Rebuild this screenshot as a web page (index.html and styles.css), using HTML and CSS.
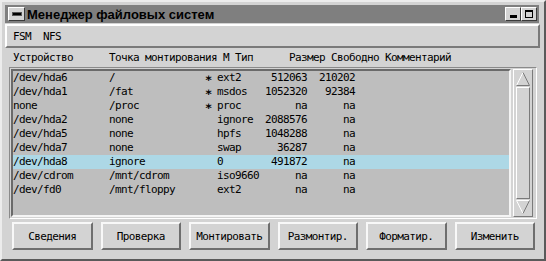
FILE: index.html
```html
<!DOCTYPE html>
<html lang="ru">
<head>
    <meta charset="UTF-8">
    <title>Менеджер файловых систем</title>
    <link rel="stylesheet" href="styles.css">
</head>
<body>

<div class="window">
    <div class="titlebar">
        <span class="wm-btn close"><i></i></span>
        <span class="title">Менеджер файловых систем</span>
        <span class="wm-btn min"><i></i></span>
        <span class="wm-btn max"><i></i></span>
    </div>

    <div class="menubar">
        <span>FSM</span>
        <span>NFS</span>
    </div>

    <div class="header">
        <span>Устройство</span>
        <span>Точка монтирования</span>
        <span>М</span>
        <span>Тип</span>
        <span>Размер</span>
        <span>Свободно</span>
        <span>Комментарий</span>
    </div>

    <div class="listframe">
        <div class="list">
            <div class="row"><span>/dev/hda6</span><span>/</span><span class="mark">∗</span><span>ext2</span><span class="num">512063</span><span class="num">210202</span><span></span></div>
            <div class="row"><span>/dev/hda1</span><span>/fat</span><span class="mark">∗</span><span>msdos</span><span class="num">1052320</span><span class="num">92384</span><span></span></div>
            <div class="row"><span>none</span><span>/proc</span><span class="mark">∗</span><span>proc</span><span class="num">na</span><span class="num">na</span><span></span></div>
            <div class="row"><span>/dev/hda2</span><span>none</span><span></span><span>ignore</span><span class="num">2088576</span><span class="num">na</span><span></span></div>
            <div class="row"><span>/dev/hda5</span><span>none</span><span></span><span>hpfs</span><span class="num">1048288</span><span class="num">na</span><span></span></div>
            <div class="row"><span>/dev/hda7</span><span>none</span><span></span><span>swap</span><span class="num">36287</span><span class="num">na</span><span></span></div>
            <div class="row selected"><span>/dev/hda8</span><span>ignore</span><span></span><span>0</span><span class="num">491872</span><span class="num">na</span><span></span></div>
            <div class="row"><span>/dev/cdrom</span><span>/mnt/cdrom</span><span></span><span>iso9660</span><span class="num">na</span><span class="num">na</span><span></span></div>
            <div class="row"><span>/dev/fd0</span><span>/mnt/floppy</span><span></span><span>ext2</span><span class="num">na</span><span class="num">na</span><span></span></div>
        </div>

        <div class="scrollbar">
            <svg class="arrow" width="14" height="14" viewBox="0 0 14 14">
                <polygon points="7,0.5 0.5,13.5 13.5,13.5" fill="#d3d3d3"/>
                <polyline points="0.5,13.5 7,0.5" fill="none" stroke="#ffffff"/>
                <polyline points="7,0.5 13.5,13.5 0.5,13.5" fill="none" stroke="#7a7a7a"/>
            </svg>
            <div class="slider"></div>
            <svg class="arrow" width="14" height="14" viewBox="0 0 14 14">
                <polygon points="0.5,0.5 13.5,0.5 7,13.5" fill="#d3d3d3"/>
                <polyline points="7,13.5 0.5,0.5 13.5,0.5" fill="none" stroke="#ffffff"/>
                <polyline points="13.5,0.5 7,13.5" fill="none" stroke="#7a7a7a"/>
            </svg>
        </div>
    </div>

    <div class="buttons">
        <button>Сведения</button>
        <button>Проверка</button>
        <button>Монтировать</button>
        <button>Размонтир.</button>
        <button>Форматир.</button>
        <button>Изменить</button>
    </div>
</div>

</body>
</html>
```

FILE: styles.css
```css
/* Base */
* {
    box-sizing: border-box;
    margin: 0;
    padding: 0;
}
body {
    width: 546px;
    height: 261px;
    overflow: hidden;
    background-color: #d3d3d3;
}

/* Window frame */
.window {
    width: 546px;
    height: 261px;
    display: flex;
    flex-direction: column;
    padding: 3px 4px 3px 3px;
    border: 2px solid;
    border-color: #ececec #5a5a5a #5a5a5a #ececec;
    background-color: #d3d3d3;
    font-family: "DejaVu Sans Mono", monospace;
    font-size: 11px;
    letter-spacing: -0.62px;
    color: #000;
}

/* Title bar */
.titlebar {
    height: 18px;
    margin-right: 1px;
    display: flex;
    align-items: center;
    padding: 0 2px 0 3px;
    background-color: #7f7f7f;
}
.title {
    flex: 1;
    margin-left: 2px;
    font-family: "Liberation Sans", Arial, sans-serif;
    font-size: 13px;
    font-weight: bold;
    letter-spacing: 0;
}
.wm-btn {
    display: flex;
    align-items: center;
    justify-content: center;
    width: 16px;
    height: 14px;
    background-color: #d3d3d3;
    border: 1px solid;
    border-color: #ffffff #3a3a3a #3a3a3a #ffffff;
}
.wm-btn.close {
    width: 17px;
}
.wm-btn.close i {
    width: 10px;
    height: 4px;
    background-color: #000;
    border: 1px solid #555;
}
.wm-btn.min {
    align-items: flex-end;
    padding-bottom: 2px;
}
.wm-btn.min i {
    width: 7px;
    height: 3px;
    background-color: #000;
}
.wm-btn.max i {
    width: 8px;
    height: 8px;
    border: 1px solid #000;
    border-top-width: 2px;
}

/* Menu bar */
.menubar {
    height: 24px;
    margin-top: 1px;
    display: flex;
    align-items: center;
    gap: 12px;
    padding-left: 6px;
    border: 2px solid;
    border-color: #ffffff #7a7a7a #7a7a7a #ffffff;
}

/* Column header */
.header {
    height: 19px;
    display: grid;
    grid-template-columns: 96px 114px 12px 54px 42px 54px 1fr;
    align-items: center;
    padding-left: 8px;
}

/* List */
.listframe {
    height: 152px;
    margin: 0 3px 0 4px;
    display: flex;
    padding: 1px;
    border: 1px solid;
    border-color: #8a8a8a #ffffff #ffffff #8a8a8a;
}
.list {
    flex: 1;
    border: 2px solid;
    border-color: #6a6a6a #f4f4f4 #f4f4f4 #6a6a6a;
    background-color: #bebebe;
}
.row {
    display: grid;
    grid-template-columns: 96px 96px 12px 48px 42px 48px 1fr;
    height: 14px;
    line-height: 14px;
    white-space: nowrap;
}
.row .num {
    text-align: right;
}
.row .mark {
    font-weight: bold;
    font-size: 12px;
}
.row.selected {
    background-color: #add8e6;
}

/* Scrollbar */
.scrollbar {
    width: 20px;
    margin: 0 2px 0 2px;
    display: flex;
    flex-direction: column;
    padding: 2px;
    border: 1px solid;
    border-color: #ffffff #7a7a7a #7a7a7a #ffffff;
}
.scrollbar .arrow {
    display: block;
    flex: none;
}
.slider {
    flex: 1;
    margin: 1px 0;
    border: 1px solid;
    border-color: #ffffff #7a7a7a #7a7a7a #ffffff;
}

/* Buttons */
.buttons {
    height: 28px;
    margin-top: 3px;
    display: flex;
    gap: 8px;
    padding: 0 5px 0 7px;
}
.buttons button {
    flex: 1;
    font-family: inherit;
    font-size: 11px;
    letter-spacing: -0.62px;
    color: #000;
    background-color: #d3d3d3;
    border: 2px solid;
    border-color: #f8f8f8 #6e6e6e #6e6e6e #f8f8f8;
}
```
